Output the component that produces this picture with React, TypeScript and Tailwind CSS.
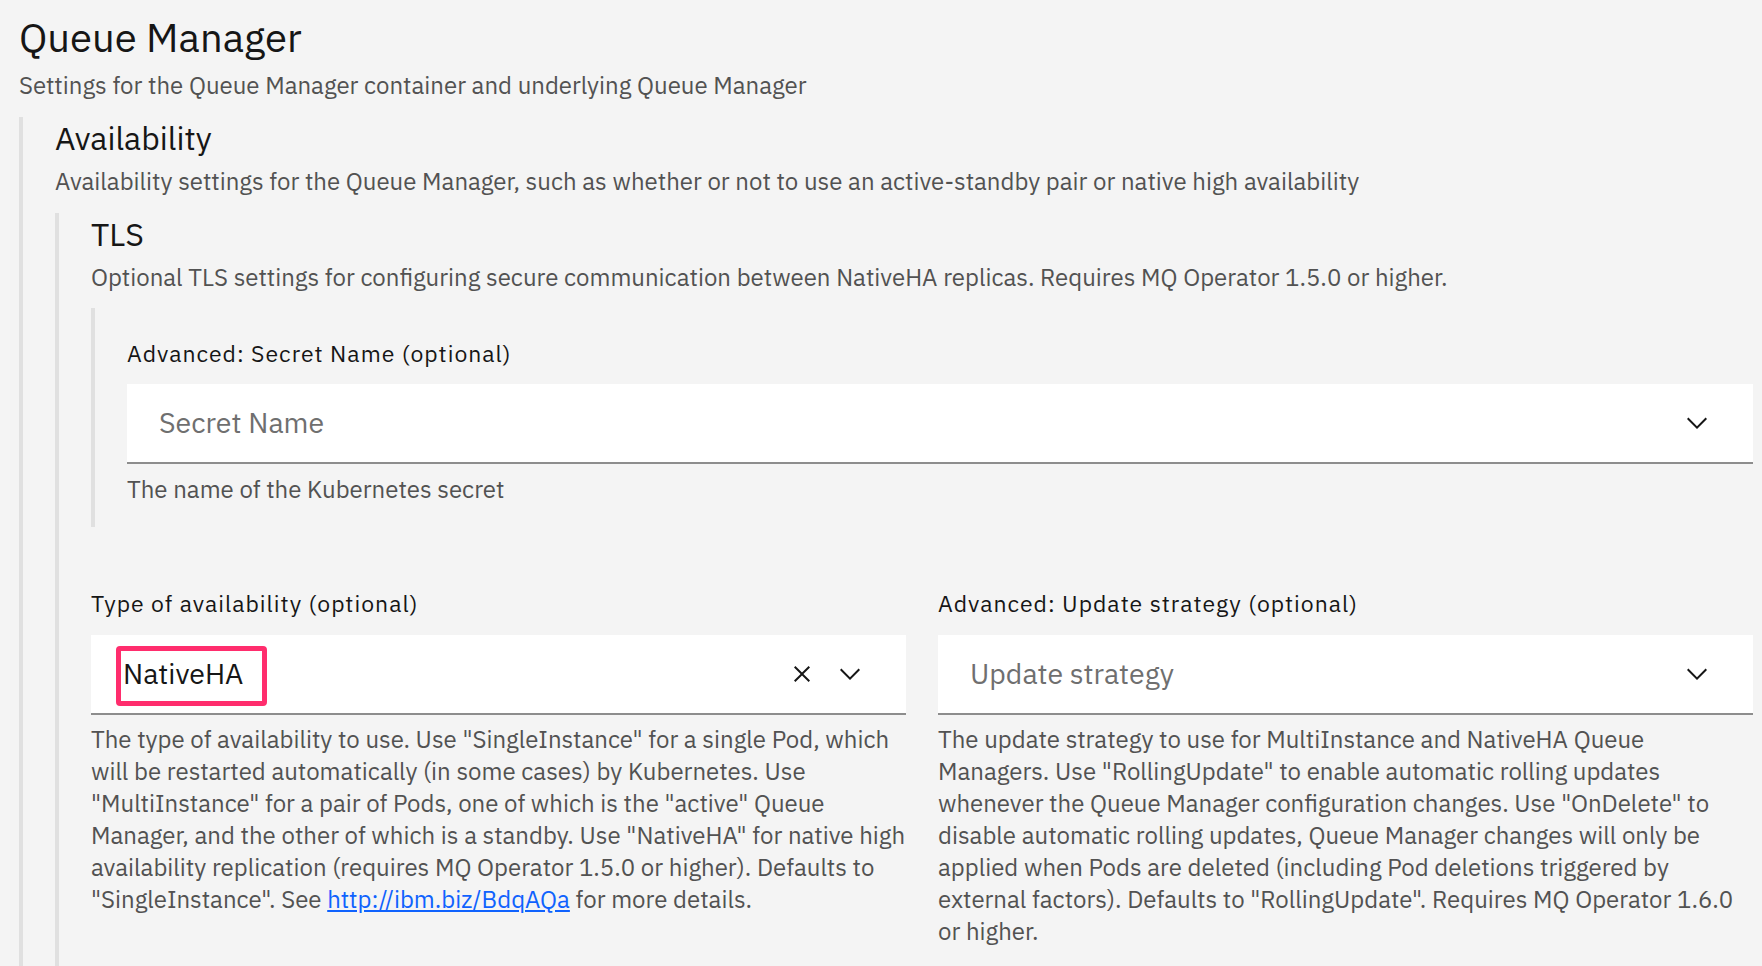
const font = { fontFamily: '"IBM Plex Sans", "Open Sans", "Noto Sans", sans-serif' };

function ChevronDown() {
  return (
    <svg width="32" height="32" viewBox="0 0 16 16" fill="#161616" aria-hidden="true">
      <path d="M8 11L3 6 3.7 5.3 8 9.6 12.3 5.3 13 6z" />
    </svg>
  );
}

function CloseIcon() {
  return (
    <svg width="32" height="32" viewBox="0 0 16 16" fill="#161616" aria-hidden="true">
      <path d="M12 4.7L11.3 4 8 7.3 4.7 4 4 4.7 7.3 8 4 11.3 4.7 12 8 8.7 11.3 12 12 11.3 8.7 8z" />
    </svg>
  );
}

function Label({ children }: { children: React.ReactNode }) {
  return <div className="whitespace-nowrap text-[23px] leading-[28px] tracking-[1px] text-[#161616]">{children}</div>;
}

function Helper({ children, className = "" }: { children: React.ReactNode; className?: string }) {
  return (
    <div className={`whitespace-nowrap text-[24px] leading-[32px] text-[#525252] ${className}`}>{children}</div>
  );
}

type SelectProps = {
  placeholder?: string;
  value?: string;
  clearable?: boolean;
};

function Select({ placeholder, value, clearable }: SelectProps) {
  return (
    <div className="flex h-[80px] items-center bg-white border-b-2 border-[#8d8d8d] pl-[32px] pr-[40px]">
      <div className="flex-1 text-[28.5px] leading-[36px]">
        {value ? (
          <span className="relative inline-block text-[#161616]">
            {value}
            {/* annotation highlight */}
            <span className="absolute left-[-7px] right-[-24px] top-[-10px] bottom-[-14px] rounded-[4px] border-[5px] border-[#ff2d6d]" />
          </span>
        ) : (
          <span className="text-[#6f6f6f]">{placeholder}</span>
        )}
      </div>
      {clearable && (
        <div className="mr-[16px]">
          <CloseIcon />
        </div>
      )}
      <ChevronDown />
    </div>
  );
}

export default function App() {
  return (
    <div className="h-[966px] w-full overflow-hidden bg-[#f4f4f4] pl-[19px] pr-[9px] pt-[13px]" style={font}>
      <h1 className="text-[40px] leading-[48px] text-[#161616]">Queue Manager</h1>
      <p className="mt-[8px] text-[24px] leading-[32px] text-[#525252]">
        Settings for the Queue Manager container and underlying Queue Manager
      </p>

      {/* Availability */}
      <section className="mt-[16px] border-l-4 border-[#e0e0e0] pl-[32px] pt-[3px] pb-[40px]">
        <h2 className="text-[32px] leading-[36px] text-[#161616]">Availability</h2>
        <p className="mt-[9px] whitespace-nowrap text-[24px] leading-[32px] text-[#525252]">
          Availability settings for the Queue Manager, such as whether or not to use an active-standby pair or native
          high availability
        </p>

        {/* TLS */}
        <section className="mt-[16px] border-l-4 border-[#e0e0e0] pl-[32px] pt-[3px] pb-[40px]">
          <h3 className="text-[32px] leading-[36px] text-[#161616]">TLS</h3>
          <p className="mt-[9px] whitespace-nowrap text-[24px] leading-[32px] text-[#525252]">
            Optional TLS settings for configuring secure communication between NativeHA replicas. Requires MQ Operator
            1.5.0 or higher.
          </p>

          <div className="mt-[15px] border-l-4 border-[#e0e0e0] pl-[32px] pt-[31px] pb-[22px]">
            <Label>Advanced: Secret Name (optional)</Label>
            <div className="mt-[17px]">
              <Select placeholder="Secret Name" />
            </div>
            <Helper className="mt-[9px]">The name of the Kubernetes secret</Helper>
          </div>

          <div className="mt-[62px] grid grid-cols-2 gap-[32px]">
            <div>
              <Label>Type of availability (optional)</Label>
              <div className="mt-[18px]">
                <Select value="NativeHA" clearable />
              </div>
              <Helper className="mt-[8px]">
                The type of availability to use. Use "SingleInstance" for a single Pod, which
                <br />
                will be restarted automatically (in some cases) by Kubernetes. Use
                <br />
                "MultiInstance" for a pair of Pods, one of which is the "active" Queue
                <br />
                Manager, and the other of which is a standby. Use "NativeHA" for native high
                <br />
                availability replication (requires MQ Operator 1.5.0 or higher). Defaults to
                <br />
                "SingleInstance". See{" "}
                <a href="#" className="text-[#0f62fe] underline">
                  http://ibm.biz/BdqAQa
                </a>{" "}
                for more details.
              </Helper>
            </div>
            <div>
              <Label>Advanced: Update strategy (optional)</Label>
              <div className="mt-[18px]">
                <Select placeholder="Update strategy" />
              </div>
              <Helper className="mt-[8px]">
                The update strategy to use for MultiInstance and NativeHA Queue
                <br />
                Managers. Use "RollingUpdate" to enable automatic rolling updates
                <br />
                whenever the Queue Manager configuration changes. Use "OnDelete" to
                <br />
                disable automatic rolling updates, Queue Manager changes will only be
                <br />
                applied when Pods are deleted (including Pod deletions triggered by
                <br />
                external factors). Defaults to "RollingUpdate". Requires MQ Operator 1.6.0
                <br />
                or higher.
              </Helper>
            </div>
          </div>
        </section>
      </section>
    </div>
  );
}
